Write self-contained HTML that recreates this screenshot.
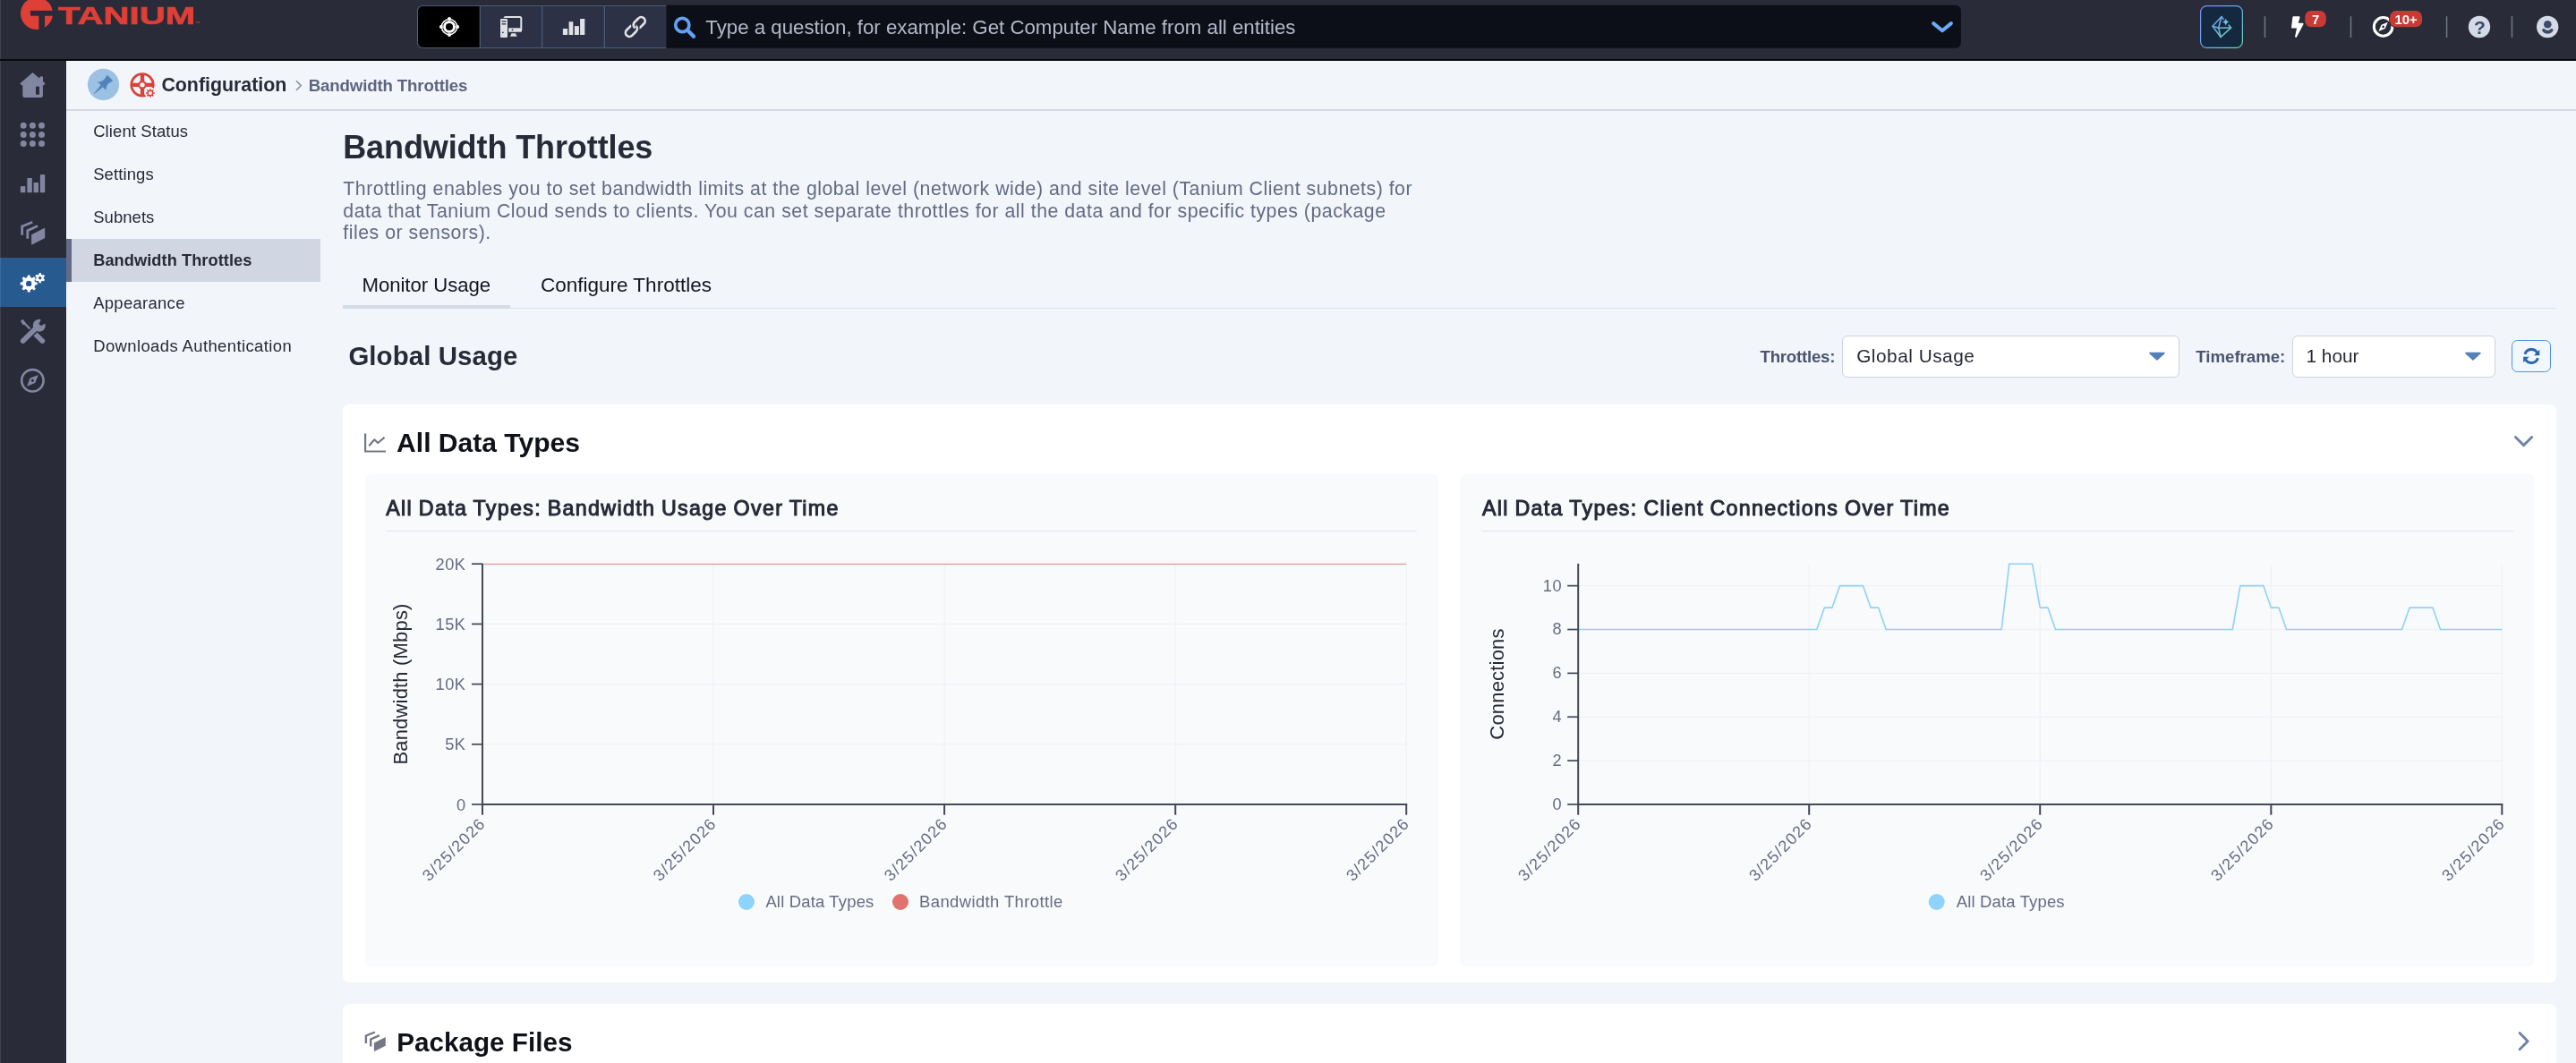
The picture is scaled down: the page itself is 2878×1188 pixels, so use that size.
<!DOCTYPE html>
<html lang="en">
<head>
<meta charset="utf-8">
<title>Bandwidth Throttles</title>
<style>
*{box-sizing:border-box;margin:0;padding:0}
html,body{width:2878px;height:1188px;overflow:hidden;background:#f2f5fa;font-family:"Liberation Sans",sans-serif;color:#272a37}
#app{position:relative;width:2878px;height:1188px;overflow:hidden;background:#f2f5fa}
#topbar{position:absolute;left:0;top:0;width:2878px;height:68px;background:#292b38;border-bottom:2px solid #07090f}
#sidebar{position:absolute;left:0;top:68px;width:74px;height:1120px;background:#292b38}
#sbactive{position:absolute;left:0;top:288px;width:74px;height:55px;background:#275b90}
#crumb{position:absolute;left:74px;top:68px;width:2804px;height:55.500px;border-bottom:2px solid #d5d9e3}
.t{position:absolute;white-space:nowrap;line-height:1}
#txt{position:absolute;left:0;top:0;width:2878px;height:1188px;will-change:transform}
#navsel{position:absolute;left:74px;top:266.600px;width:284px;height:48px;background:#d0d6e2;border-left:6px solid #656a85}
.card{position:absolute;left:383px;width:2473px;background:#fff;border-radius:7px}
.panel{position:absolute;top:530px;height:550px;background:#f8fafc;border-radius:6px}
.hr{position:absolute;top:592.600px;height:1.500px;background:#e0e6ef}
.sel{position:absolute;top:375px;height:46.600px;background:#fff;border:1.300px solid #cdd3e0;border-radius:6px}
#refresh{position:absolute;left:2806px;top:380px;width:44px;height:36px;background:#f1f7fe;border:1.500px solid #4f94dc;border-radius:6.500px}
#tabline{position:absolute;left:383px;top:343.800px;width:2473px;height:1.300px;background:#dbe1ea}
#tabsel{position:absolute;left:383px;top:341px;width:187px;height:4px;background:#d3dbe6}
svg{position:absolute;left:0;top:0;overflow:visible;will-change:transform}
svg text{font-family:"Liberation Sans",sans-serif}
</style>
</head>
<body>
<div id="app">
<div id="topbar"></div>
<div id="sidebar"></div>
<div id="sbactive"></div>
<div id="crumb"></div>
<div id="navsel"></div>
<div id="tabline"></div>
<div id="tabsel"></div>
<div class="sel" style="left:2058.300px;width:376.400px"></div>
<div class="sel" style="left:2561.200px;width:226.500px"></div>
<div id="refresh"></div>
<div class="card" style="top:452px;height:646px"></div>
<div class="card" style="top:1121.600px;height:120px"></div>
<div class="panel" style="left:407.500px;width:1199.400px"></div>
<div class="panel" style="left:1630.700px;width:1201.300px"></div>
<div class="hr" style="left:431px;width:1151.700px"></div>
<div class="hr" style="left:1654.800px;width:1153.200px"></div>
<svg width="2878" height="1188" viewBox="0 0 2878 1188">
<circle cx="41" cy="15.1" r="18" fill="#de3f36"/><rect x="34" y="11.9" width="27" height="5.8" fill="#292b38"/><rect x="43.4" y="17" width="6.6" height="17" fill="#292b38"/>
<path d="M472,6.5 H536 V53.5 H472 a5.5,5.5 0 0 1 -5.5,-5.5 V12 a5.5,5.5 0 0 1 5.5,-5.5Z" fill="#000"/>
<rect x="536" y="6.5" width="208" height="47" fill="#2c3145"/>
<path d="M744,6.5 H472 a5.5,5.5 0 0 0 -5.5,5.5 V48 a5.5,5.5 0 0 0 5.5,5.5 H744 M536.3,6.5 V53.5 M605.6,6.5 V53.5 M675.4,6.5 V53.5" fill="none" stroke="#4b5b78" stroke-width="1.2"/>
<path d="M744.600,5.800 H2184.900 a6,6 0 0 1 6,6 V47.800 a6,6 0 0 1 -6,6 H744.600Z" fill="#0c0f18"/>
<circle cx="502" cy="30" r="9.300" fill="#fff"/><circle cx="502" cy="30" r="7.400" fill="none" stroke="#000" stroke-width="1"/><circle cx="502" cy="30" r="4" fill="#000"/>
<circle cx="502.0" cy="20.9" r="2" fill="#fff"/>
<circle cx="511.1" cy="30.0" r="2" fill="#fff"/>
<circle cx="502.0" cy="39.1" r="2" fill="#fff"/>
<circle cx="492.9" cy="30.0" r="2" fill="#fff"/>
<rect x="563.5" y="19" width="18.8" height="15.5" rx="1.6" fill="none" stroke="#dfe1e4" stroke-width="2"/><rect x="563" y="31.3" width="19.8" height="4.2" fill="#dfe1e4"/><circle cx="572.5" cy="33.4" r="0.9" fill="#2c3145"/>
<path d="M570,40.7 L571.5,37.3 H576 L577.5,40.7Z" fill="#dfe1e4"/>
<rect x="557.8" y="20" width="10.4" height="23" rx="1.5" fill="#2c3145"/><rect x="559" y="21" width="8" height="21" rx="1.2" fill="#dfe1e4"/>
<rect x="560.6" y="23.2" width="4.8" height="1.3" fill="#2c3145"/><rect x="560.6" y="26.2" width="4.8" height="1.3" fill="#2c3145"/><circle cx="561.8" cy="36.3" r="0.9" fill="#2c3145"/>
<rect x="628.9" y="32" width="5.2" height="7.0" fill="#dfe1e4"/>
<rect x="635.6" y="24.2" width="4.7" height="14.8" fill="#dfe1e4"/>
<rect x="641.9" y="29.1" width="5.0" height="9.9" fill="#dfe1e4"/>
<rect x="648.1" y="21" width="5.2" height="18.0" fill="#dfe1e4"/>
<g fill="none" stroke="#dfe1e4" stroke-width="2.700"><rect x="-7.400" y="-4.300" width="14.800" height="8.600" rx="4.300" transform="translate(714.200,25.600) rotate(-45)"/><rect x="-7.400" y="-4.300" width="14.800" height="8.600" rx="4.300" transform="translate(705.400,34.400) rotate(-45)" stroke="#2c3145" stroke-width="5.500"/><rect x="-7.400" y="-4.300" width="14.800" height="8.600" rx="4.300" transform="translate(705.400,34.400) rotate(-45)"/><path d="M-7.400,0 a4.300,4.300 0 0 1 4.300,-4.300 h4" transform="translate(714.200,25.600) rotate(-45)" stroke="#2c3145" stroke-width="5.500"/><path d="M-7.400,0.500 V0 a4.300,4.300 0 0 1 4.300,-4.300 h5" transform="translate(714.200,25.600) rotate(-45)"/></g>
<circle cx="762.3" cy="28" r="7.6" fill="none" stroke="#62a2f6" stroke-width="3.600"/><path d="M768.3,34 L775,40.7" stroke="#62a2f6" stroke-width="4.400" stroke-linecap="round"/>
<path d="M2160.100,26.100 L2170,34.300 L2179.900,26.100" fill="none" stroke="#6eaafa" stroke-width="4" stroke-linecap="round" stroke-linejoin="round"/>
<defs><linearGradient id="ag" x1="0" y1="0" x2="1" y2="1"><stop offset="0" stop-color="#8089f2"/><stop offset="0.5" stop-color="#6fa8ea"/><stop offset="1" stop-color="#6fdcb0"/></linearGradient><linearGradient id="ag2" gradientUnits="userSpaceOnUse" x1="2471" y1="18" x2="2493" y2="42"><stop offset="0" stop-color="#6c97f2"/><stop offset="1" stop-color="#72d8bf"/></linearGradient></defs>
<rect x="2458.600" y="6.600" width="46.800" height="46.800" rx="7" fill="#14283f" stroke="url(#ag)" stroke-width="1.200"/>
<g fill="none" stroke="url(#ag2)" stroke-width="1.5" stroke-linejoin="round" stroke-linecap="round"><path d="M2484,21.5 L2482,18.500 L2472,29.300 L2481.100,41.500 L2492.6,30.9 L2490,28"/><path d="M2482,18.5 L2478.6,31.3 L2481.1,41.5 M2472,29.300 L2478.600,31.300 L2492.6,30.9"/></g>
<path d="M2486.7,20.2 Q2487.2,24.1 2491.1,24.6 Q2487.2,25.1 2486.7,29 Q2486.2,25.1 2482.3,24.6 Q2486.2,24.1 2486.7,20.2Z" fill="#6fc3d8"/>
<rect x="2529.7000000000003" y="18.2" width="1.5" height="23.800" fill="#707989"/>
<rect x="2625.7000000000003" y="18.2" width="1.5" height="23.800" fill="#707989"/>
<rect x="2732.8" y="18.2" width="1.5" height="23.800" fill="#707989"/>
<rect x="2805.7000000000003" y="18.2" width="1.5" height="23.800" fill="#707989"/>
<path transform="translate(2560,18.3) scale(0.0425,0.0461)" d="M296 160H180.600l42.600-129.800C227.200 15 215.700 0 200 0H56C44 0 33.800 8.900 32.200 20.800l-32 240C-1.700 275.200 9.500 288 24 288h118.700L96.600 482.500c-3.600 15.200 8 29.500 23.300 29.500 8.400 0 16.400-4.400 20.800-12l176-304c9.300-15.900-2.200-36-20.700-36z" fill="#fff"/>
<circle cx="2662.6" cy="29.9" r="10.3" fill="none" stroke="#fff" stroke-width="3"/>
<path d="M2667.800,24.700 L2664.700,32 L2657.400,35.100 L2660.500,27.800Z M2662.600,28.500 a1.400,1.400 0 1 0 0.010,0Z" fill="#fff" fill-rule="evenodd"/>
<rect x="2574.2" y="11" width="25.6" height="20.2" rx="8" fill="#292b38"/><rect x="2575.2" y="12" width="23.6" height="18.2" rx="7" fill="#c93a34"/>
<rect x="2669.1" y="11" width="37.9" height="20.2" rx="8" fill="#292b38"/><rect x="2670.1" y="12" width="35.9" height="18.2" rx="7" fill="#c93a34"/>
<circle cx="2770" cy="30" r="12.200" fill="#d5dbe6"/>
<circle cx="2846.200" cy="30" r="12.200" fill="#d5dbe6"/><circle cx="2846.300" cy="27.300" r="4.300" fill="#3d4a6b"/><path d="M2839.800,33.400 Q2841.300,31.600 2842.700,32.300 A5.400,5.400 0 0 0 2849.900,32.300 Q2851.300,31.600 2852.800,33.400 Q2850.600,37.800 2846.300,37.800 Q2842,37.800 2839.800,33.400Z" fill="#3d4a6b"/>
<rect x="0" y="0" width="1.100" height="66" fill="#3d404d"/><rect x="0" y="68" width="1.100" height="220" fill="#3d404d"/><rect x="0" y="343" width="1.100" height="845" fill="#3d404d"/><rect x="0" y="288" width="1.100" height="55" fill="#3a6a9b"/>
<path d="M36.5,81.6 L22.9,93.3 L24.6,95.2 L36.5,85 L48.4,95.2 L50.1,93.3Z" fill="#8286a0" stroke="#8286a0" stroke-width="1" stroke-linejoin="round"/>
<path d="M36.500,84.800 L25.300,94.400 V106.900 a2,2 0 0 0 2,2 H45.900 a2,2 0 0 0 2,-2 V94.400Z" fill="#8286a0"/><rect x="44.3" y="85.400" width="3.700" height="8" rx="0.6" fill="#8286a0"/><rect x="40" y="96.700" width="4" height="9" fill="#292b38"/>
<circle cx="26.2" cy="140.3" r="3.5" fill="#8286a0"/>
<circle cx="26.2" cy="150.4" r="3.5" fill="#8286a0"/>
<circle cx="26.2" cy="160.4" r="3.5" fill="#8286a0"/>
<circle cx="36.4" cy="140.3" r="3.5" fill="#8286a0"/>
<circle cx="36.4" cy="150.4" r="3.5" fill="#8286a0"/>
<circle cx="36.4" cy="160.4" r="3.5" fill="#8286a0"/>
<circle cx="46.5" cy="140.3" r="3.5" fill="#8286a0"/>
<circle cx="46.5" cy="150.4" r="3.5" fill="#8286a0"/>
<circle cx="46.5" cy="160.4" r="3.5" fill="#8286a0"/>
<rect x="22.9" y="208.1" width="5.4" height="7.1" fill="#8286a0"/>
<rect x="30.4" y="199" width="5.4" height="16.2" fill="#8286a0"/>
<rect x="37.6" y="204" width="5.4" height="11.2" fill="#8286a0"/>
<rect x="44.9" y="195.1" width="5.3" height="20.1" fill="#8286a0"/>
<path d="M35.1,262.3 L50.2,254.6 L50.2,266.0 L35.1,273.7Z" fill="#8286a0"/><path d="M30.8,266.8 L30.8,257.6 L42.1,252.5" fill="none" stroke="#8286a0" stroke-width="2.8"/><path d="M24.7,262.7 L24.7,253.0 L36.3,248.3" fill="none" stroke="#8286a0" stroke-width="2.8"/>
<path d="M39.30,315.20 L41.70,315.55 L41.70,318.25 L39.30,318.60 L38.42,320.71 L39.88,322.66 L37.96,324.58 L36.01,323.12 L33.90,324.00 L33.55,326.40 L30.85,326.40 L30.50,324.00 L28.39,323.12 L26.44,324.58 L24.52,322.66 L25.98,320.71 L25.10,318.60 L22.70,318.25 L22.70,315.55 L25.10,315.20 L25.98,313.09 L24.52,311.14 L26.44,309.22 L28.39,310.68 L30.50,309.80 L30.85,307.40 L33.55,307.40 L33.90,309.80 L36.01,310.68 L37.96,309.22 L39.88,311.14 L38.42,313.09Z M35.40,316.90 A3.2,3.2 0 1,0 29.00,316.90 A3.2,3.2 0 1,0 35.40,316.90Z" fill="#fff" fill-rule="evenodd"/>
<path d="M48.69,309.30 L50.30,309.53 L50.30,311.67 L48.69,311.90 L47.82,313.41 L48.42,314.91 L46.57,315.98 L45.57,314.71 L43.83,314.71 L42.83,315.98 L40.98,314.91 L41.58,313.41 L40.71,311.90 L39.10,311.67 L39.10,309.53 L40.71,309.30 L41.58,307.79 L40.98,306.29 L42.83,305.22 L43.83,306.49 L45.57,306.49 L46.57,305.22 L48.42,306.29 L47.82,307.79Z M46.40,310.60 A1.7,1.7 0 1,0 43.00,310.60 A1.7,1.7 0 1,0 46.40,310.60Z" fill="#fff" fill-rule="evenodd" transform="rotate(30 44.700 310.600)"/>
<g stroke="#8286a0" fill="none" stroke-linecap="round"><path d="M38.500,372.500 L47.300,381" stroke-width="5.800"/><path d="M25,359 L34.500,368.500" stroke-width="2.400" stroke-linecap="butt"/></g>
<path d="M22.900,358.700 L25.500,356.700 L29.300,361.700 L25.700,363.300Z" fill="#8286a0"/>
<path d="M25.700,381 L41,366" stroke="#292b38" stroke-width="8.600" stroke-linecap="round" fill="none"/>
<path d="M25.700,381 L41,366" stroke="#8286a0" stroke-width="5.800" stroke-linecap="round" fill="none"/>
<circle cx="43.800" cy="363.800" r="7" fill="#8286a0"/><path d="M44,363.600 L46.200,354 L53.500,361.300 Z" fill="#292b38"/><rect x="-2.200" y="-6" width="4.400" height="6.500" fill="#292b38" transform="translate(45.200,362.400) rotate(45)"/>
<circle cx="36.400" cy="425.300" r="12.200" fill="none" stroke="#8286a0" stroke-width="2.600"/><path d="M42.800,418.900 L39.200,428.100 L30,431.700 L33.600,422.500Z M36.400,423.700 a1.600,1.600 0 1 0 0.010,0Z" fill="#8286a0" fill-rule="evenodd"/>
<circle cx="115.500" cy="94.450" r="17.600" fill="#9bc1e3"/>
<g transform="translate(115.500,94.450) rotate(45)" fill="#5381b9"><path d="M-4.500,-10.600 L4.500,-10.600 L3.300,-4.500 Q3.600,0.200 6.900,2.500 L-6.900,2.500 Q-3.600,0.200 -3.300,-4.500 Z"/><path d="M-1.600,2.400 L1.600,2.400 L0.250,14.800 L-0.250,14.800Z"/></g>
<circle cx="159" cy="94.850" r="12.200" fill="none" stroke="#dc4038" stroke-width="2.800"/><path d="M159,82.500 V107.200 M146.600,94.850 H171.400" stroke="#dc4038" stroke-width="4.300"/><circle cx="159" cy="94.850" r="4.800" fill="#dc4038"/><circle cx="159" cy="94.850" r="2.700" fill="#f2f5fa"/>
<circle cx="167.900" cy="104" r="6.400" fill="#f2f5fa"/><path d="M171.30,103.18 L172.75,103.31 L172.75,104.69 L171.30,104.82 L170.88,105.83 L171.82,106.94 L170.84,107.92 L169.73,106.98 L168.72,107.40 L168.59,108.85 L167.21,108.85 L167.08,107.40 L166.07,106.98 L164.96,107.92 L163.98,106.94 L164.92,105.83 L164.50,104.82 L163.05,104.69 L163.05,103.31 L164.50,103.18 L164.92,102.17 L163.98,101.06 L164.96,100.08 L166.07,101.02 L167.08,100.60 L167.21,99.15 L168.59,99.15 L168.72,100.60 L169.73,101.02 L170.84,100.08 L171.82,101.06 L170.88,102.17Z M169.90,104.00 A2,2 0 1,0 165.90,104.00 A2,2 0 1,0 169.90,104.00Z" fill="#dc4038" fill-rule="evenodd"/>
<path d="M331,90.300 L336.300,95.600 L331,100.900" fill="none" stroke="#9297aa" stroke-width="1.700"/>
<path d="M2401.9,394.600 H2417.9 L2409.9,402 Z" fill="#5480b7" stroke="#5480b7" stroke-width="1.600" stroke-linejoin="round"/>
<path d="M2754.9,394.600 H2770.9 L2762.9,402 Z" fill="#5480b7" stroke="#5480b7" stroke-width="1.600" stroke-linejoin="round"/>
<g fill="none" stroke="#2a68ad" stroke-width="2.900"><path d="M2820.99,395.93 A7.5,7.5 0 0 1 2835.00,394.83"/><path d="M2835.41,400.07 A7.5,7.5 0 0 1 2821.40,401.17"/></g><path d="M2837.300,390.800 V397.300 H2830.800Z" fill="#2a68ad"/><path d="M2819.100,405.200 V398.700 H2825.600Z" fill="#2a68ad"/>
<path d="M408.100,484.500 V504.500 H431" fill="none" stroke="#737884" stroke-width="2.200"/><path d="M412.300,498.300 L418.300,491.300 L422.200,495 L429.500,488.800" fill="none" stroke="#737884" stroke-width="2.200" stroke-linejoin="round"/>
<path d="M2810.400,488.500 L2819.550,497.600 L2828.700,488.500" fill="none" stroke="#6e83a5" stroke-width="2.900" stroke-linecap="round" stroke-linejoin="round"/>
<path d="M2815.100,1154.600 L2824.100,1163.700 L2815.100,1172.800" fill="none" stroke="#6e83a5" stroke-width="2.900" stroke-linecap="round" stroke-linejoin="round"/>
<path d="M417.9,1165.5 L430.8,1158.9 L430.8,1168.7 L417.9,1175.3Z" fill="#737884"/><path d="M414.2,1169.4 L414.2,1161.5 L423.9,1157.1" fill="none" stroke="#737884" stroke-width="2.4"/><path d="M408.9,1165.9 L408.9,1157.5 L418.9,1153.5" fill="none" stroke="#737884" stroke-width="2.4"/>
<rect x="540" y="629.6" width="1032.2" height="1.300" fill="#f0f2f6"/><rect x="540" y="696.8" width="1032.2" height="1.300" fill="#f0f2f6"/><rect x="540" y="764.0" width="1032.2" height="1.300" fill="#f0f2f6"/><rect x="540" y="831.2" width="1032.2" height="1.300" fill="#f0f2f6"/><rect x="796.4" y="630.2" width="1.300" height="268.79999999999995" fill="#f0f2f6"/><rect x="1054.5" y="630.2" width="1.300" height="268.79999999999995" fill="#f0f2f6"/><rect x="1312.6" y="630.2" width="1.300" height="268.79999999999995" fill="#f0f2f6"/><rect x="1570.6" y="630.2" width="1.300" height="268.79999999999995" fill="#f0f2f6"/>
<rect x="540" y="629.800" width="1031.200" height="1.300" fill="#e39a95"/>
<rect x="538" y="629.9000000000001" width="2" height="270.09999999999997" fill="#444857"/><rect x="538" y="898" width="1034.2" height="2" fill="#444857"/><rect x="527" y="629.35" width="12" height="1.700" fill="#444857"/><rect x="527" y="696.55" width="12" height="1.700" fill="#444857"/><rect x="527" y="763.75" width="12" height="1.700" fill="#444857"/><rect x="527" y="830.95" width="12" height="1.700" fill="#444857"/><rect x="527" y="898.15" width="12" height="1.700" fill="#444857"/><rect x="538.0" y="899" width="2" height="11.700" fill="#444857"/><rect x="796.0" y="899" width="2" height="11.700" fill="#444857"/><rect x="1054.1" y="899" width="2" height="11.700" fill="#444857"/><rect x="1312.2" y="899" width="2" height="11.700" fill="#444857"/><rect x="1570.2" y="899" width="2" height="11.700" fill="#444857"/><text x="0" y="0" transform="translate(543.5,921.5) rotate(-45)" text-anchor="end" font-size="18" letter-spacing="1.200" fill="#666b82">3/25/2026</text><text x="0" y="0" transform="translate(801.5,921.5) rotate(-45)" text-anchor="end" font-size="18" letter-spacing="1.200" fill="#666b82">3/25/2026</text><text x="0" y="0" transform="translate(1059.6,921.5) rotate(-45)" text-anchor="end" font-size="18" letter-spacing="1.200" fill="#666b82">3/25/2026</text><text x="0" y="0" transform="translate(1317.7,921.5) rotate(-45)" text-anchor="end" font-size="18" letter-spacing="1.200" fill="#666b82">3/25/2026</text><text x="0" y="0" transform="translate(1575.7,921.5) rotate(-45)" text-anchor="end" font-size="18" letter-spacing="1.200" fill="#666b82">3/25/2026</text>
<rect x="1764.2" y="654.0" width="1032.1000000000001" height="1.300" fill="#f0f2f6"/><rect x="1764.2" y="702.9" width="1032.1000000000001" height="1.300" fill="#f0f2f6"/><rect x="1764.2" y="751.8" width="1032.1000000000001" height="1.300" fill="#f0f2f6"/><rect x="1764.2" y="800.7" width="1032.1000000000001" height="1.300" fill="#f0f2f6"/><rect x="1764.2" y="849.5" width="1032.1000000000001" height="1.300" fill="#f0f2f6"/><rect x="2020.6" y="630.2" width="1.300" height="268.79999999999995" fill="#f0f2f6"/><rect x="2278.7" y="630.2" width="1.300" height="268.79999999999995" fill="#f0f2f6"/><rect x="2536.7" y="630.2" width="1.300" height="268.79999999999995" fill="#f0f2f6"/><rect x="2794.7" y="630.2" width="1.300" height="268.79999999999995" fill="#f0f2f6"/>
<polyline points="1763.2,703.5 1771.8,703.5 1780.4,703.5 1789.0,703.5 1797.6,703.5 1806.2,703.5 1814.8,703.5 1823.4,703.5 1832.0,703.5 1840.6,703.5 1849.2,703.5 1857.8,703.5 1866.4,703.5 1875.0,703.5 1883.6,703.5 1892.2,703.5 1900.8,703.5 1909.4,703.5 1918.0,703.5 1926.6,703.5 1935.2,703.5 1943.8,703.5 1952.4,703.5 1961.0,703.5 1969.6,703.5 1978.2,703.5 1986.8,703.5 1995.4,703.5 2004.0,703.5 2012.6,703.5 2021.2,703.5 2029.8,703.5 2038.4,679.1 2047.0,679.1 2055.6,654.6 2064.2,654.6 2072.8,654.6 2081.4,654.6 2090.0,679.1 2098.6,679.1 2107.2,703.5 2115.8,703.5 2124.4,703.5 2133.0,703.5 2141.6,703.5 2150.2,703.5 2158.8,703.5 2167.4,703.5 2176.0,703.5 2184.6,703.5 2193.2,703.5 2201.8,703.5 2210.4,703.5 2219.0,703.5 2227.6,703.5 2236.2,703.5 2244.8,630.2 2253.4,630.2 2262.0,630.2 2270.6,630.2 2279.2,679.1 2287.9,679.1 2296.5,703.5 2305.1,703.5 2313.7,703.5 2322.3,703.5 2330.9,703.5 2339.5,703.5 2348.1,703.5 2356.7,703.5 2365.3,703.5 2373.9,703.5 2382.5,703.5 2391.1,703.5 2399.7,703.5 2408.3,703.5 2416.9,703.5 2425.5,703.5 2434.1,703.5 2442.7,703.5 2451.3,703.5 2459.9,703.5 2468.5,703.5 2477.1,703.5 2485.7,703.5 2494.3,703.5 2502.9,654.6 2511.5,654.6 2520.1,654.6 2528.7,654.6 2537.3,679.1 2545.9,679.1 2554.5,703.5 2563.1,703.5 2571.7,703.5 2580.3,703.5 2588.9,703.5 2597.5,703.5 2606.1,703.5 2614.7,703.5 2623.3,703.5 2631.9,703.5 2640.5,703.5 2649.1,703.5 2657.7,703.5 2666.3,703.5 2674.9,703.5 2683.5,703.5 2692.1,679.1 2700.7,679.1 2709.3,679.1 2717.9,679.1 2726.5,703.5 2735.1,703.5 2743.7,703.5 2752.3,703.5 2760.9,703.5 2769.5,703.5 2778.1,703.5 2786.7,703.5 2795.3,703.5" fill="none" stroke="#8fd1f8" stroke-width="1.600" stroke-linejoin="round"/>
<rect x="1762.2" y="629.9000000000001" width="2" height="270.09999999999997" fill="#444857"/><rect x="1762.2" y="898" width="1034.1000000000001" height="2" fill="#444857"/><rect x="1751.2" y="653.79" width="12" height="1.700" fill="#444857"/><rect x="1751.2" y="702.66" width="12" height="1.700" fill="#444857"/><rect x="1751.2" y="751.53" width="12" height="1.700" fill="#444857"/><rect x="1751.2" y="800.40" width="12" height="1.700" fill="#444857"/><rect x="1751.2" y="849.28" width="12" height="1.700" fill="#444857"/><rect x="1751.2" y="898.15" width="12" height="1.700" fill="#444857"/><rect x="1762.2" y="899" width="2" height="11.700" fill="#444857"/><rect x="2020.2" y="899" width="2" height="11.700" fill="#444857"/><rect x="2278.2" y="899" width="2" height="11.700" fill="#444857"/><rect x="2536.3" y="899" width="2" height="11.700" fill="#444857"/><rect x="2794.3" y="899" width="2" height="11.700" fill="#444857"/><text x="0" y="0" transform="translate(1767.7,921.5) rotate(-45)" text-anchor="end" font-size="18" letter-spacing="1.200" fill="#666b82">3/25/2026</text><text x="0" y="0" transform="translate(2025.7,921.5) rotate(-45)" text-anchor="end" font-size="18" letter-spacing="1.200" fill="#666b82">3/25/2026</text><text x="0" y="0" transform="translate(2283.8,921.5) rotate(-45)" text-anchor="end" font-size="18" letter-spacing="1.200" fill="#666b82">3/25/2026</text><text x="0" y="0" transform="translate(2541.8,921.5) rotate(-45)" text-anchor="end" font-size="18" letter-spacing="1.200" fill="#666b82">3/25/2026</text><text x="0" y="0" transform="translate(2799.8,921.5) rotate(-45)" text-anchor="end" font-size="18" letter-spacing="1.200" fill="#666b82">3/25/2026</text>
<text transform="translate(455,764.500) rotate(-90)" text-anchor="middle" font-size="22" letter-spacing="0.180" fill="#272a37">Bandwidth (Mbps)</text>
<text transform="translate(1679.500,764.500) rotate(-90)" text-anchor="middle" font-size="22" letter-spacing="0.180" fill="#272a37">Connections</text>
<circle cx="834" cy="1008" r="9" fill="#8dd3fb"/><circle cx="1006" cy="1008" r="9" fill="#e0736e"/><circle cx="2163.700" cy="1008" r="9" fill="#8dd3fb"/>
</svg>
<div id="txt">
<div class="t" style="top:20px;font-size:22.25px;color:#b4b8c8;left:788.30px;">Type a question, for example: Get Computer Name from all entities</div>
<div class="t" style="top:85px;font-size:21.36px;color:#272a37;font-weight:bold;left:180.40px;">Configuration</div>
<div class="t" style="top:87px;font-size:18.67px;color:#5f6580;font-weight:bold;letter-spacing:-0.152px;left:344.80px;">Bandwidth Throttles</div>
<div class="t" style="top:138px;font-size:18.46px;color:#272a37;letter-spacing:0.114px;left:104.20px;">Client Status</div>
<div class="t" style="top:186px;font-size:18.46px;color:#272a37;letter-spacing:0.129px;left:104.20px;">Settings</div>
<div class="t" style="top:234px;font-size:18.46px;color:#272a37;letter-spacing:0.079px;left:104.20px;">Subnets</div>
<div class="t" style="top:282px;font-size:18.2px;color:#272a37;font-weight:bold;letter-spacing:0.079px;left:104.20px;">Bandwidth Throttles</div>
<div class="t" style="top:330px;font-size:18.46px;color:#272a37;letter-spacing:0.308px;left:104.20px;">Appearance</div>
<div class="t" style="top:378px;font-size:18.46px;color:#272a37;letter-spacing:0.405px;left:104.20px;">Downloads Authentication</div>
<div class="t" style="top:147px;font-size:36.0px;color:#272a37;font-weight:bold;letter-spacing:-0.099px;left:383.20px;">Bandwidth Throttles</div>
<div class="t" style="top:201px;font-size:21.3px;color:#646a82;letter-spacing:0.509px;left:383.30px;">Throttling enables you to set bandwidth limits at the global level (network wide) and site level (Tanium Client subnets) for</div>
<div class="t" style="top:226px;font-size:21.3px;color:#646a82;letter-spacing:0.509px;left:383.30px;">data that Tanium Cloud sends to clients. You can set separate throttles for all the data and for specific types (package</div>
<div class="t" style="top:250px;font-size:21.3px;color:#646a82;letter-spacing:0.509px;left:383.30px;">files or sensors).</div>
<div class="t" style="top:308px;font-size:22.18px;color:#14161d;letter-spacing:-0.046px;left:404.50px;">Monitor Usage</div>
<div class="t" style="top:308px;font-size:22.53px;color:#14161d;left:603.90px;">Configure Throttles</div>
<div class="t" style="top:383px;font-size:29.4px;color:#272a37;font-weight:bold;letter-spacing:0.101px;left:389.40px;">Global Usage</div>
<div class="t" style="top:390px;font-size:18.67px;color:#4a5570;font-weight:bold;letter-spacing:-0.226px;left:1966.50px;">Throttles:</div>
<div class="t" style="top:390px;font-size:18.67px;color:#4a5570;font-weight:bold;letter-spacing:-0.026px;left:2453.30px;">Timeframe:</div>
<div class="t" style="top:388px;font-size:20.77px;color:#272a37;letter-spacing:0.524px;left:2074.20px;">Global Usage</div>
<div class="t" style="top:388px;font-size:20.77px;color:#272a37;letter-spacing:0.022px;left:2576.50px;">1 hour</div>
<div class="t" style="top:480px;font-size:30.07px;color:#0f1219;font-weight:bold;left:443.10px;">All Data Types</div>
<div class="t" style="top:557px;font-size:23.22px;color:#272a37;letter-spacing:1.337px;word-spacing:-1.0px;left:431.20px;-webkit-text-stroke:1px #272a37;">All Data Types: Bandwidth Usage Over Time</div>
<div class="t" style="top:557px;font-size:23.22px;color:#272a37;letter-spacing:1.332px;word-spacing:-1.0px;left:1655.90px;-webkit-text-stroke:1px #272a37;">All Data Types: Client Connections Over Time</div>
<div class="t" style="top:999px;font-size:18.46px;color:#666b82;letter-spacing:0.181px;left:855.40px;">All Data Types</div>
<div class="t" style="top:999px;font-size:18.46px;color:#666b82;letter-spacing:0.392px;left:1027.10px;">Bandwidth Throttle</div>
<div class="t" style="top:999px;font-size:18.46px;color:#666b82;letter-spacing:0.181px;left:2185.70px;">All Data Types</div>
<div class="t" style="top:1150px;font-size:29.68px;color:#0f1219;font-weight:bold;left:443.20px;">Package Files</div>
<div class="t" style="top:622px;font-size:18.2px;color:#666b82;letter-spacing:0.600px;right:2357.40px;">20K</div>
<div class="t" style="top:689px;font-size:18.2px;color:#666b82;letter-spacing:0.600px;right:2357.40px;">15K</div>
<div class="t" style="top:756px;font-size:18.2px;color:#666b82;letter-spacing:0.600px;right:2357.40px;">10K</div>
<div class="t" style="top:823px;font-size:18.2px;color:#666b82;letter-spacing:0.600px;right:2357.40px;">5K</div>
<div class="t" style="top:891px;font-size:18.2px;color:#666b82;letter-spacing:0.600px;right:2357.40px;">0</div>
<div class="t" style="top:646px;font-size:18.2px;color:#666b82;letter-spacing:0.600px;right:1132.90px;">10</div>
<div class="t" style="top:694px;font-size:18.2px;color:#666b82;letter-spacing:0.600px;right:1132.90px;">8</div>
<div class="t" style="top:743px;font-size:18.2px;color:#666b82;letter-spacing:0.600px;right:1132.90px;">6</div>
<div class="t" style="top:792px;font-size:18.2px;color:#666b82;letter-spacing:0.600px;right:1132.90px;">4</div>
<div class="t" style="top:841px;font-size:18.2px;color:#666b82;letter-spacing:0.600px;right:1132.90px;">2</div>
<div class="t" style="top:890px;font-size:18.2px;color:#666b82;letter-spacing:0.600px;right:1132.90px;">0</div>
<div class="t" style="top:15px;font-size:14.8px;color:#fff;font-weight:bold;left:2387.00px;width:400px;text-align:center;">7</div>
<div class="t" style="top:15px;font-size:14.8px;color:#fff;font-weight:bold;left:2488.00px;width:400px;text-align:center;">10+</div>
<div class="t" style="top:3px;font-size:28.5px;color:#de3f36;font-weight:bold;left:65.20px;transform-origin:0 50%;transform:scaleX(1.41);letter-spacing:0px;-webkit-text-stroke:0.7px #de3f36;">TANIUM</div>
<div class="t" style="top:20px;font-size:21px;color:#3d4a6b;font-weight:bold;left:2570.30px;width:400px;text-align:center;">?</div>
<div class="t" style="top:24px;font-size:5.5px;color:#de3f36;font-weight:bold;left:218.30px;">™</div>
</div>
</div>
</body>
</html>
